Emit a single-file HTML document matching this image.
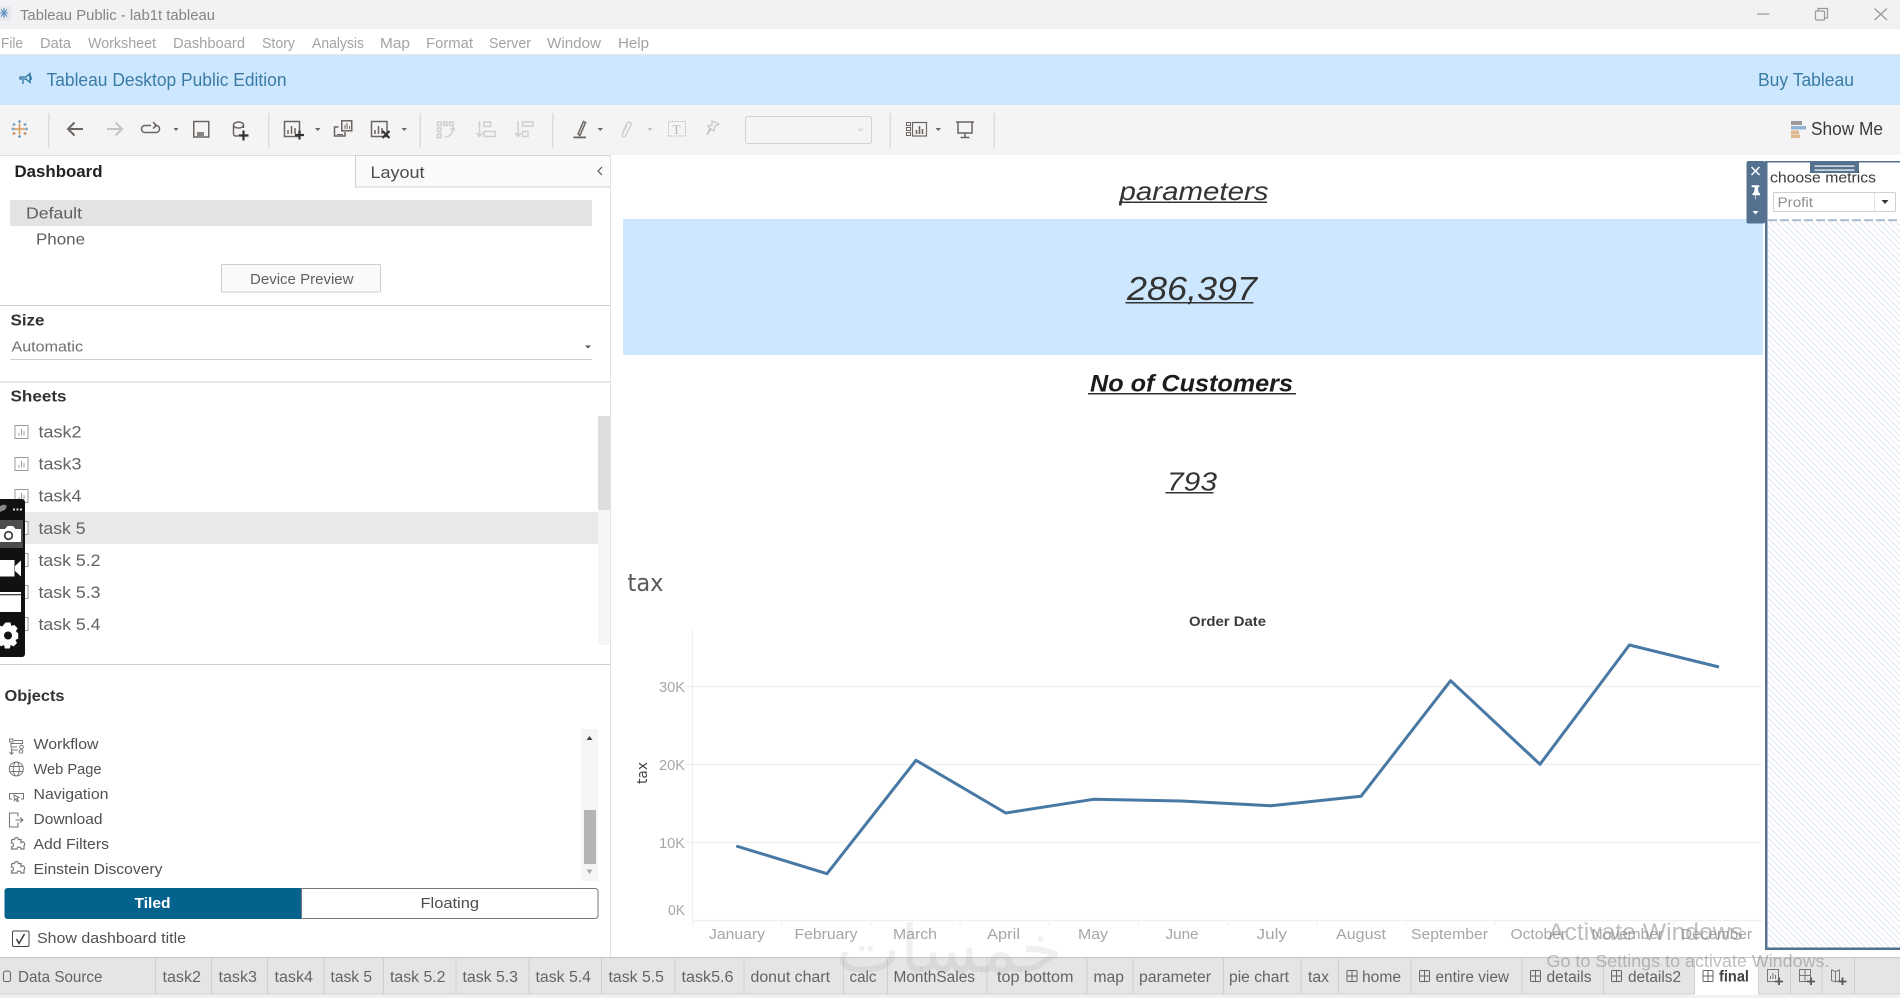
<!DOCTYPE html>
<html><head><meta charset="utf-8"><title>Tableau Public - lab1t tableau</title>
<style>
html,body{margin:0;padding:0;background:#fff;width:1900px;height:998px;overflow:hidden}
svg{display:block;position:absolute;left:0;top:0}
text{font-family:"Liberation Sans",sans-serif}
.m{font-size:14.5px;fill:#a3a3a3}
.d{font-size:16px;fill:#5e5e5e}
.h{font-size:16px;font-weight:bold;fill:#333}
.s{font-size:17px;fill:#636363}
.o{font-size:15px;fill:#505050}
.t{font-size:15.5px;fill:#646464}
.y{font-size:14.5px;fill:#a6a6a6}
.x{font-size:14.5px;fill:#a6a6a6}
.ic{fill:none;stroke:#6b6461;stroke-width:1.5}
.lt{fill:none;stroke:#cfcfcf;stroke-width:1.5}
.sh{fill:#fff;stroke:#999;stroke-width:1}
</style></head><body>
<svg width="1900" height="998" viewBox="0 0 1900 998" xmlns="http://www.w3.org/2000/svg">
<defs>
<pattern id="hatch" width="6" height="6" patternUnits="userSpaceOnUse">
<path d="M-1 -1L7 7M-1 5L1 7M5 -1L7 1" stroke="#dfe6ef" stroke-width="1"/>
</pattern>
<g id="sheet"><rect x="0.5" y="0.5" width="13" height="13" class="sh"/><path d="M4.500 10.500V8M7 10.500V4M9.500 10.500V6" stroke="#999" stroke-width="1" fill="none"/></g>
<g id="grid"><rect x="0.5" y="0.5" width="10" height="11" rx="1" fill="none" stroke="#666" stroke-width="1"/><path d="M5.5 0.5V11.5M0.5 6H10.5" stroke="#666" stroke-width="1"/></g>
<path id="puzzle" d="M4 3.5h2.5a2 2 0 1 1 4 0H13l0 3a2 2 0 1 1 3 3.2V13H13a2 2 0 1 0-4 0 H3.5v-2a2 2 0 1 0 0-4V5z" fill="none" stroke="#777" stroke-width="1.2"/>
</defs>

<!-- title bar -->
<rect width="1900" height="29" fill="#f1f2f4"/>
<rect x="0" y="6" width="11" height="15" fill="#e6e8ec"/>
<g fill="none" stroke-width="1.1"><path d="M4 8v10M0 13h8M1 9.500l6 7M7 9.500l-6 7" stroke="#5b8fc0"/></g>
<text x="20" y="20" font-size="14.5" fill="#858585" textLength="195" lengthAdjust="spacingAndGlyphs">Tableau Public - lab1t tableau</text>
<path d="M1757 14h12.5" stroke="#999" stroke-width="1.2"/>
<g fill="none" stroke="#999" stroke-width="1.2"><rect x="1815.5" y="11" width="9" height="9" rx="1"/><path d="M1818 11V8.5h9.5V18H1825"/></g>
<path d="M1874.5 8.5L1887 20M1887 8.5L1874.5 20" stroke="#999" stroke-width="1.2"/>

<!-- menu -->
<rect y="29" width="1900" height="26" fill="#fff"/>
<rect y="54" width="1900" height="1" fill="#e6e6e6"/>
<text class="m" x="1" y="48" textLength="22" lengthAdjust="spacingAndGlyphs">File</text>
<text class="m" x="40" y="48" textLength="31" lengthAdjust="spacingAndGlyphs">Data</text>
<text class="m" x="88" y="48" textLength="68" lengthAdjust="spacingAndGlyphs">Worksheet</text>
<text class="m" x="173" y="48" textLength="72" lengthAdjust="spacingAndGlyphs">Dashboard</text>
<text class="m" x="262" y="48" textLength="33" lengthAdjust="spacingAndGlyphs">Story</text>
<text class="m" x="312" y="48" textLength="52" lengthAdjust="spacingAndGlyphs">Analysis</text>
<text class="m" x="380" y="48" textLength="30" lengthAdjust="spacingAndGlyphs">Map</text>
<text class="m" x="426" y="48" textLength="47" lengthAdjust="spacingAndGlyphs">Format</text>
<text class="m" x="489" y="48" textLength="42" lengthAdjust="spacingAndGlyphs">Server</text>
<text class="m" x="547" y="48" textLength="54" lengthAdjust="spacingAndGlyphs">Window</text>
<text class="m" x="618" y="48" textLength="31" lengthAdjust="spacingAndGlyphs">Help</text>

<!-- banner -->
<rect y="55" width="1900" height="50" fill="#cde8fe"/>
<g fill="none" stroke="#2a70a0" stroke-width="1.3"><path d="M20 77h6l4-3.500v9l-4-3.500h-6zM23 80v4"/><path d="M29 75l2 2v3"/></g>
<text x="46.5" y="86" font-size="18" fill="#3b7ba6" textLength="240" lengthAdjust="spacingAndGlyphs">Tableau Desktop Public Edition</text>
<text x="1758" y="86" font-size="18" fill="#3b7ba6" textLength="96" lengthAdjust="spacingAndGlyphs">Buy Tableau</text>

<!-- toolbar -->
<rect y="105" width="1900" height="50" fill="#f4f4f4"/>
<g fill="#dcdcdc"><rect x="48" y="113" width="1.5" height="35"/><rect x="268" y="113" width="1.5" height="35"/><rect x="419.5" y="113" width="1.5" height="35"/><rect x="552" y="113" width="1.5" height="35"/><rect x="889.5" y="113" width="1.5" height="35"/><rect x="993.5" y="113" width="1.5" height="35"/></g>
<!-- logo -->
<g stroke-width="1.2" fill="none">
<path d="M19.500 123.500v11M14 129h11" stroke="#d99a5b" stroke-width="1.600"/>
<path d="M19.500 120v3M18 121.500h3M19.500 135v3M18 136.500h3M11.500 129h3M13 127.500v3M25 129h3M26.500 127.500v3" stroke="#6f9cc4"/>
<path d="M14 123v3M12.500 124.500h3M25 123v3M23.500 124.500h3" stroke="#6f9cc4"/>
<path d="M14 132v3M12.500 133.500h3M25 132v3M23.500 133.500h3" stroke="#c9895a"/>
</g>
<!-- arrows -->
<path d="M83 129H68.500M74.500 122.500L68 129L74.500 135.500" fill="none" stroke="#6b6461" stroke-width="2"/>
<path d="M107 129H121.500M115.500 122.500L122 129L115.500 135.500" fill="none" stroke="#c4c4c4" stroke-width="2"/>
<path d="M151 125.500h-6a3.500 3.500 0 0 0 0 7h11.500a3.500 3.500 0 0 0 3-3.500v-.5a3.500 3.500 0 0 0-3-3h-2M153 122l3.500 3.500-3.500 3" class="ic"/>
<path d="M173.500 128h5l-2.500 3z" fill="#666"/>
<rect x="193.750" y="121.500" width="15" height="15.500" class="ic"/><rect x="197" y="132" width="7" height="5" fill="#8a8480"/>
<path d="M233.500 125v9a2.500 2.500 0 0 0 2.500 2h2M243.500 125v3M233.500 125a5 3 0 0 1 10 0a5 3 0 0 1-10 0" class="ic"/>
<path d="M243.500 130.500v10M238.500 135.500h10" stroke="#333" stroke-width="2.200"/>
<!-- new sheet -->
<rect x="284.500" y="121.500" width="15" height="15" class="ic"/><path d="M288 134v-4M291.500 134v-8M295 134v-6" stroke="#6b6461" stroke-width="1.500"/>
<path d="M299.500 130.500v9M295 135h9" stroke="#333" stroke-width="2.200"/>
<path d="M315 128h5.500l-2.750 3z" fill="#666"/>
<rect x="341.750" y="120.750" width="10" height="10" class="ic"/><path d="M345 129v-4M347 129v-6M349.500 129v-3" stroke="#6b6461"/>
<path d="M338.500 127H334.500v9h10.500v-4" class="ic"/><path d="M337 134.500h6" stroke="#6b6461"/>
<rect x="371.500" y="121.500" width="15.500" height="15" class="ic"/><path d="M375 134v-4M378.500 134v-8M382 134v-6" stroke="#6b6461" stroke-width="1.500"/>
<path d="M382.500 131l7 7M389.500 131l-7 7" stroke="#333" stroke-width="2.200"/>
<path d="M401.500 128h5.500l-2.750 3z" fill="#666"/>
<!-- swap -->
<g class="lt"><rect x="437.500" y="122" width="3.500" height="3.500"/><rect x="443.500" y="122" width="3.500" height="3.500"/><rect x="449.500" y="122" width="3.500" height="3.500"/><rect x="437.500" y="128" width="3.500" height="3.500"/><rect x="437.500" y="134" width="3.500" height="3.500"/><path d="M453 129a8 8 0 0 1-8 8M450.500 130l2.500-2.500 1.500 3"/></g>
<!-- sort -->
<g class="lt"><path d="M479.500 121v15M476.500 133l3 3.500 3-3.500"/><rect x="484" y="122" width="6.500" height="4.500"/><rect x="484" y="131.500" width="11" height="5"/></g>
<g class="lt"><path d="M518 121v15M515 133l3 3.500 3-3.500"/><rect x="522.500" y="122" width="10.500" height="4"/><rect x="522.500" y="131.500" width="5.500" height="5"/></g>
<!-- pen -->
<path d="M578 134l5.500-12.500 2 1L580 135.500z" class="ic"/><rect x="573.500" y="136.500" width="12.500" height="1.800" fill="#6b6461"/>
<path d="M597.500 128h5.500l-2.750 3z" fill="#666"/>
<path d="M627 125l-4.500 8.500c-1.500 3 2 4.500 3.500 1.500l5-10c1-3-2.500-4-4-1.500l-4 8" fill="none" stroke="#c9c9c9" stroke-width="1.300"/>
<path d="M647.500 128h5l-2.500 3z" fill="#c4c4c4"/>
<rect x="668.500" y="121.500" width="17" height="14.500" fill="none" stroke="#c4c4c4" stroke-dasharray="2 1"/>
<text x="672.500" y="134" font-size="13" fill="#b5b5b5" style="font-family:'Liberation Serif',serif">T</text>
<path d="M712 121l7 3-4 2-1 5-3-2-4 6 3-7-2-2 4-1z" fill="none" stroke="#c4c4c4" stroke-width="1.200"/>
<rect x="745.500" y="116.500" width="126" height="27" rx="2" fill="#f4f4f4" stroke="#d2d2d2"/>
<path d="M857 128.500h7l-3.500 3.500z" fill="#dcdcdc"/>
<!-- cards -->
<g class="ic"><rect x="906.500" y="122.500" width="4" height="3" stroke-width="1"/><rect x="906.500" y="127.500" width="4" height="3" stroke-width="1"/><rect x="906.500" y="132.500" width="4" height="3" stroke-width="1"/><rect x="912.500" y="122.500" width="14" height="13.500" stroke-width="1.200"/></g>
<path d="M916.500 134v-4M919.500 134v-8M922.500 134v-5" stroke="#6b6461" stroke-width="1.600"/>
<path d="M935.500 128h5.500l-2.750 3z" fill="#666"/>
<path d="M956 122h18M958 122v11h14v-11M965 133v4M960.500 137.500h9" class="ic"/>
<!-- show me -->
<rect x="1791" y="121" width="11" height="4" fill="#9a9a9a"/><rect x="1791" y="126" width="15" height="3.500" fill="#8fb4d6"/><rect x="1791" y="130.500" width="8" height="3.500" fill="#e0b88e"/><rect x="1791" y="134.500" width="9" height="3.500" fill="#e0b88e"/>
<text x="1811" y="135" font-size="18" fill="#3c3c3c" textLength="72" lengthAdjust="spacingAndGlyphs">Show Me</text>

<!-- left pane -->
<rect x="610" y="155" width="1" height="802" fill="#e2e2e2"/>
<rect x="0" y="155" width="355" height="1" fill="#dedede"/>
<rect x="355" y="155" width="255" height="32" fill="#fafafa"/>
<path d="M355.500 155v32H610" fill="none" stroke="#d0d0d0"/>
<path d="M355 155.500H610" stroke="#d6d6d6"/>
<text x="14.500" y="177" font-size="17" font-weight="bold" fill="#222" textLength="88" lengthAdjust="spacingAndGlyphs">Dashboard</text>
<text x="370.500" y="178" font-size="17" fill="#4c4c4c" textLength="54" lengthAdjust="spacingAndGlyphs">Layout</text>
<path d="M602 167l-4 4 4 4" fill="none" stroke="#555" stroke-width="1.200"/>
<rect x="10" y="200" width="582" height="26" fill="#e3e3e3"/>
<text class="d" x="26" y="218.500" textLength="56" lengthAdjust="spacingAndGlyphs">Default</text>
<text class="d" x="36" y="244.500" textLength="49" lengthAdjust="spacingAndGlyphs">Phone</text>
<rect x="221.500" y="264.500" width="159" height="27.500" rx="1" fill="#fafafa" stroke="#cdcdcd"/>
<text x="250" y="284" font-size="14.500" fill="#606060" textLength="103.500" lengthAdjust="spacingAndGlyphs">Device Preview</text>
<rect y="305" width="610" height="1" fill="#cfcfcf"/>
<text class="h" x="10.500" y="325.500" textLength="34" lengthAdjust="spacingAndGlyphs">Size</text>
<text x="11.500" y="351.500" font-size="14.500" fill="#707070" textLength="71.500" lengthAdjust="spacingAndGlyphs">Automatic</text>
<path d="M585 345.500h6l-3 3z" fill="#555"/>
<rect x="10" y="359" width="582" height="1" fill="#cfcfcf"/>
<rect y="381.500" width="610" height="1" fill="#cfcfcf"/>
<text class="h" x="10.500" y="401.500" textLength="56" lengthAdjust="spacingAndGlyphs">Sheets</text>

<rect x="598" y="416" width="12" height="229" fill="#f6f6f6"/>
<rect x="598" y="416" width="12" height="94" fill="#dedede"/>
<rect x="0" y="512" width="598" height="32" fill="#e9e9e9"/>
<use href="#sheet" x="14.500" y="425"/><use href="#sheet" x="14.500" y="457"/><use href="#sheet" x="14.500" y="489"/><use href="#sheet" x="14.500" y="521"/><use href="#sheet" x="14.500" y="553"/><use href="#sheet" x="14.500" y="585"/><use href="#sheet" x="14.500" y="617"/>
<text class="s" x="38.500" y="437.500" textLength="43" lengthAdjust="spacingAndGlyphs">task2</text>
<text class="s" x="38.500" y="469.500" textLength="43" lengthAdjust="spacingAndGlyphs">task3</text>
<text class="s" x="38.500" y="501.500" textLength="43" lengthAdjust="spacingAndGlyphs">task4</text>
<text class="s" x="38.500" y="534" textLength="47" lengthAdjust="spacingAndGlyphs">task 5</text>
<text class="s" x="38.500" y="566" textLength="62" lengthAdjust="spacingAndGlyphs">task 5.2</text>
<text class="s" x="38.500" y="598" textLength="62" lengthAdjust="spacingAndGlyphs">task 5.3</text>
<text class="s" x="38.500" y="630" textLength="62" lengthAdjust="spacingAndGlyphs">task 5.4</text>
<rect y="664" width="610" height="1" fill="#cfcfcf"/>

<!-- capture overlay -->
<path d="M0 499H22a3 3 0 0 1 3 3V654a3 3 0 0 1-3 3H0z" fill="#111"/>
<path d="M0 512V506l4-1.500 3 1.500-2 4-3 1z" fill="#888"/>
<g fill="#ddd"><rect x="13" y="508.500" width="2" height="2"/><rect x="16.500" y="508.500" width="2" height="2"/><rect x="20" y="508.500" width="2" height="2"/></g>
<rect x="0" y="520" width="23" height="28" fill="#4d4d4d"/>
<path d="M0 529h5l2.500-3h5.500l2.500 3H21v13H0z" fill="#fff"/><circle cx="8.500" cy="535.500" r="3.800" fill="#fff" stroke="#333" stroke-width="1.600"/>
<rect x="0" y="560" width="14.500" height="16.500" fill="#fff"/><path d="M15 566l6-5.500v16l-6-5.500z" fill="#fff"/>
<rect x="0" y="592" width="21" height="20" fill="#fff"/><rect x="0" y="594" width="21" height="1.300" fill="#444"/>
<path d="M5.500 622h5l.8 3.400 3-.9 3.300 3.300-1.700 3 2.300 2.100V638l-2.700 1.500 1.500 3-3.300 3.400-3-1.400-1 3.500h-4.800l-.9-3.500-3 1.400-3-3.300 1.500-3L-5 638v-4.800l2.600-1.900-1.400-3.100 3-3.200 3 1z" fill="#fff" transform="translate(0,.5)"/>
<circle cx="8" cy="635.500" r="4" fill="#111"/>

<!-- objects -->
<text class="h" x="4.500" y="701" font-weight="bold" textLength="60" lengthAdjust="spacingAndGlyphs">Objects</text>
<g fill="none" stroke="#777" stroke-width="1">
<rect x="9.500" y="739" width="3.500" height="3"/><path d="M14 740.500h8.500v3H11v3.500h6M11 750h7"/><circle cx="21.500" cy="747" r="1.800"/><circle cx="21" cy="751.500" r="1.800"/><path d="M11.500 748v6M9.500 752l2 2.500 2-2.500"/>
<circle cx="16.300" cy="769" r="7"/><ellipse cx="16.300" cy="769" rx="3" ry="7"/><path d="M9.300 766.500h14M9.300 771.500h14"/>
<path d="M12 799H9.500v-5.500h14V799H21"/><path d="M14 795l5 2.500-2 1 1.500 2.500-1.200.6-1.400-2.500-1.600 1.500z"/>
<path d="M18 813h-8.500v14H18v-4.500M18 816.500V813M15.500 820h7M20 817.500l3 2.500-3 2.500" stroke-width="1.100"/>
</g>
<use href="#puzzle" x="8" y="836"/><use href="#puzzle" x="8" y="860"/>
<text class="o" x="33.500" y="749" textLength="65" lengthAdjust="spacingAndGlyphs">Workflow</text>
<text class="o" x="33.500" y="774" textLength="68" lengthAdjust="spacingAndGlyphs">Web Page</text>
<text class="o" x="33.500" y="799" textLength="75" lengthAdjust="spacingAndGlyphs">Navigation</text>
<text class="o" x="33.500" y="824" textLength="69" lengthAdjust="spacingAndGlyphs">Download</text>
<text class="o" x="33.500" y="849" textLength="75.500" lengthAdjust="spacingAndGlyphs">Add Filters</text>
<text class="o" x="33.500" y="874" textLength="129" lengthAdjust="spacingAndGlyphs">Einstein Discovery</text>
<rect x="581" y="729" width="17" height="152" fill="#f5f5f5"/>
<rect x="584" y="810" width="12" height="54" fill="#b4b4b4"/>
<path d="M586.500 740h6l-3-4z" fill="#444"/><path d="M586.500 869.500h6l-3 4.500z" fill="#aaa"/>
<path d="M7.500 888H301.500V919H7.500a3 3 0 0 1-3-3V891a3 3 0 0 1 3-3z" fill="#05628c"/>
<path d="M301.500 888.500H595a3 3 0 0 1 3 3V915.500a3 3 0 0 1-3 3H301.500z" fill="#fff" stroke="#777"/>
<text x="134.500" y="908" font-size="15" font-weight="bold" fill="#fff" textLength="36" lengthAdjust="spacingAndGlyphs">Tiled</text>
<text x="420.500" y="908" font-size="15" fill="#4c4c4c" textLength="58.500" lengthAdjust="spacingAndGlyphs">Floating</text>
<rect x="12.500" y="931" width="16.500" height="15.500" rx="1.500" fill="#fff" stroke="#444"/>
<path d="M16.500 939l2.500 4.500L24.500 934" fill="none" stroke="#333" stroke-width="1.400"/>
<text class="o" x="37" y="943" textLength="149" lengthAdjust="spacingAndGlyphs">Show dashboard title</text>

<!-- dashboard content -->
<text x="1119.500" y="200" font-size="26" font-style="italic" fill="#333" textLength="149" lengthAdjust="spacingAndGlyphs">parameters</text>
<rect x="1119" y="201.500" width="148" height="1.500" fill="#333"/>
<rect x="623" y="219" width="1140" height="136" fill="#cde8fe"/>
<text x="1127" y="300" font-size="33" font-style="italic" fill="#333" textLength="130" lengthAdjust="spacingAndGlyphs">286,397</text>
<rect x="1125.500" y="302" width="128" height="1.500" fill="#333"/>
<text x="1090" y="391.500" font-size="24.500" font-style="italic" font-weight="bold" fill="#1c1c1c" textLength="203" lengthAdjust="spacingAndGlyphs">No of Customers</text>
<rect x="1088" y="393" width="208" height="1.500" fill="#333"/>
<text x="1167" y="490.500" font-size="26" font-style="italic" fill="#333" textLength="50" lengthAdjust="spacingAndGlyphs">793</text>
<rect x="1165.500" y="492" width="48" height="1.500" fill="#333"/>
<text x="627.500" y="591" font-size="24" fill="#5a5a5a" style="font-family:'DejaVu Sans',sans-serif" textLength="36" lengthAdjust="spacingAndGlyphs">tax</text>
<text x="1189" y="626" font-size="14" font-weight="bold" fill="#3a3a3a" textLength="77" lengthAdjust="spacingAndGlyphs">Order Date</text>

<!-- chart -->
<g stroke="#efefef" stroke-width="1.200" fill="none">
<path d="M692.500 630V920.500"/>
<path d="M685 686.500H1762M685 764.500H1762M685 842.500H1762M692 920.500H1762"/>
<path d="M692.500 920v5M781.700 920v5M870.900 920v5M960.100 920v5M1049.300 920v5M1138.500 920v5M1227.700 920v5M1316.900 920v5M1406.100 920v5M1495.300 920v5M1584.500 920v5M1673.700 920v5"/>
</g>
<text class="y" x="659" y="692" textLength="26" lengthAdjust="spacingAndGlyphs">30K</text>
<text class="y" x="659" y="770" textLength="26" lengthAdjust="spacingAndGlyphs">20K</text>
<text class="y" x="659" y="848" textLength="26" lengthAdjust="spacingAndGlyphs">10K</text>
<text class="y" x="668" y="915" textLength="17" lengthAdjust="spacingAndGlyphs">0K</text>
<text transform="translate(647,784) rotate(-90)" font-size="14" fill="#444" style="font-family:'DejaVu Sans',sans-serif" textLength="22" lengthAdjust="spacingAndGlyphs">tax</text>
<polyline points="736.300,846 827,873.700 916,760.300 1005.700,813 1093.500,799.300 1181.400,801 1271,805.700 1361,796.300 1450.600,680.700 1540,764.300 1629.400,645 1719,667" fill="none" stroke="#4878a4" stroke-width="3" stroke-linejoin="round"/>
<text class="x" x="709" y="939" textLength="56" lengthAdjust="spacingAndGlyphs">January</text>
<text class="x" x="794.500" y="939" textLength="63" lengthAdjust="spacingAndGlyphs">February</text>
<text class="x" x="893" y="939" textLength="44" lengthAdjust="spacingAndGlyphs">March</text>
<text class="x" x="987" y="939" textLength="33" lengthAdjust="spacingAndGlyphs">April</text>
<text class="x" x="1078" y="939" textLength="30" lengthAdjust="spacingAndGlyphs">May</text>
<text class="x" x="1165.500" y="939" textLength="33" lengthAdjust="spacingAndGlyphs">June</text>
<text class="x" x="1256.500" y="939" textLength="30.500" lengthAdjust="spacingAndGlyphs">July</text>
<text class="x" x="1336" y="939" textLength="50" lengthAdjust="spacingAndGlyphs">August</text>
<text class="x" x="1411" y="939" textLength="77" lengthAdjust="spacingAndGlyphs">September</text>
<text class="x" x="1510.500" y="939" textLength="55.500" lengthAdjust="spacingAndGlyphs">October</text>
<text class="x" x="1591.500" y="939" textLength="71.500" lengthAdjust="spacingAndGlyphs">November</text>
<text class="x" x="1681" y="939" textLength="71" lengthAdjust="spacingAndGlyphs">December</text>

<!-- floating filter -->
<rect x="1767" y="163" width="133" height="785" fill="#fff"/>
<rect x="1768" y="222" width="132" height="726" fill="url(#hatch)"/>
<rect x="1765" y="161" width="2.500" height="789" fill="#54728f"/>
<rect x="1765" y="161" width="135" height="1.500" fill="#54728f"/>
<rect x="1765" y="947.500" width="135" height="2.500" fill="#54728f"/>
<rect x="1746.500" y="161" width="18.500" height="62.500" rx="2" fill="#54728f"/>
<path d="M1751.500 167l8 8M1759.500 167l-8 8" stroke="#fff" stroke-width="1.500"/>
<path d="M1752 185.500h7v1.500h-1.500l.8 5.500 1.500 1.200V195h-7v-1.300l1.500-1.200.8-5.500H1752zM1755.500 195v4.500" fill="#fff" stroke="#fff" stroke-width=".6"/>
<path d="M1752.500 211h6l-3 3.500z" fill="#fff"/>
<rect x="1810" y="161" width="49" height="12" fill="#54728f"/>
<rect x="1814.500" y="165.500" width="40" height="1.200" fill="#fff"/><rect x="1814.500" y="169.500" width="40" height="1.200" fill="#fff"/>
<text x="1770" y="182.500" font-size="15" fill="#3c3c3c" textLength="106" lengthAdjust="spacingAndGlyphs">choose metrics</text>
<rect x="1773.500" y="192.500" width="122" height="19" rx="1" fill="#fff" stroke="#d0d0d0"/>
<rect x="1874" y="192.500" width="1" height="19" fill="#e2e2e2"/>
<text x="1777.500" y="207" font-size="14" fill="#909090" textLength="35.500" lengthAdjust="spacingAndGlyphs">Profit</text>
<path d="M1881.500 200h7l-3.500 4z" fill="#333"/>
<path d="M1768 220.250H1900" stroke="#a8bcd2" stroke-width="2" stroke-dasharray="9 3"/>

<!-- tab bar -->
<rect y="957" width="1900" height="41" fill="#f1f1f1"/>
<rect y="957" width="1900" height="37" fill="#e5e5e5"/>
<rect y="957" width="1900" height="1.200" fill="#c9c9c9"/>
<rect y="993.500" width="1900" height="1" fill="#d4d4d4"/>
<rect x="1694.500" y="958" width="63.500" height="37" fill="#fff"/>
<g fill="#cfcfcf">
<rect x="155" y="958" width="1" height="36"/><rect x="211" y="958" width="1" height="36"/><rect x="267" y="958" width="1" height="36"/><rect x="323.500" y="958" width="1" height="36"/><rect x="383" y="958" width="1" height="36"/><rect x="455.500" y="958" width="1" height="36"/><rect x="528.500" y="958" width="1" height="36"/><rect x="601" y="958" width="1" height="36"/><rect x="674.500" y="958" width="1" height="36"/><rect x="743.500" y="958" width="1" height="36"/><rect x="843" y="958" width="1" height="36"/><rect x="887" y="958" width="1" height="36"/><rect x="986.500" y="958" width="1" height="36"/><rect x="1086.500" y="958" width="1" height="36"/><rect x="1132.500" y="958" width="1" height="36"/><rect x="1223" y="958" width="1" height="36"/><rect x="1300.500" y="958" width="1" height="36"/><rect x="1338" y="958" width="1" height="36"/><rect x="1410.500" y="958" width="1" height="36"/><rect x="1521.500" y="958" width="1" height="36"/><rect x="1603" y="958" width="1" height="36"/><rect x="1694" y="958" width="1" height="36"/><rect x="1758" y="958" width="1" height="36"/><rect x="1790" y="958" width="1" height="36"/><rect x="1821.500" y="958" width="1" height="36"/><rect x="1854" y="958" width="1" height="36"/>
</g>
<path d="M3.500 973v7a1.500 1.500 0 0 0 1.500 1.500h4a1.500 1.500 0 0 0 1.500-1.500v-7a3.500 2 0 0 0-7 0z" fill="none" stroke="#666"/>
<text class="t" x="18" y="982" textLength="84.500" lengthAdjust="spacingAndGlyphs">Data Source</text>
<text class="t" x="162.500" y="982" textLength="38.500" lengthAdjust="spacingAndGlyphs">task2</text>
<text class="t" x="218.500" y="982" textLength="38.500" lengthAdjust="spacingAndGlyphs">task3</text>
<text class="t" x="274.500" y="982" textLength="38.500" lengthAdjust="spacingAndGlyphs">task4</text>
<text class="t" x="330.500" y="982" textLength="41.500" lengthAdjust="spacingAndGlyphs">task 5</text>
<text class="t" x="390" y="982" textLength="55.500" lengthAdjust="spacingAndGlyphs">task 5.2</text>
<text class="t" x="462.500" y="982" textLength="55.500" lengthAdjust="spacingAndGlyphs">task 5.3</text>
<text class="t" x="535.500" y="982" textLength="55.500" lengthAdjust="spacingAndGlyphs">task 5.4</text>
<text class="t" x="608.500" y="982" textLength="55.500" lengthAdjust="spacingAndGlyphs">task 5.5</text>
<text class="t" x="681.500" y="982" textLength="52" lengthAdjust="spacingAndGlyphs">task5.6</text>
<text class="t" x="750.500" y="982" textLength="79.500" lengthAdjust="spacingAndGlyphs">donut chart</text>
<text class="t" x="849.500" y="982" textLength="27" lengthAdjust="spacingAndGlyphs">calc</text>
<text class="t" x="893.500" y="982" textLength="81.500" lengthAdjust="spacingAndGlyphs">MonthSales</text>
<text class="t" x="997" y="982" textLength="76.500" lengthAdjust="spacingAndGlyphs">top bottom</text>
<text class="t" x="1093.500" y="982" textLength="30.500" lengthAdjust="spacingAndGlyphs">map</text>
<text class="t" x="1139" y="982" textLength="72" lengthAdjust="spacingAndGlyphs">parameter</text>
<text class="t" x="1229" y="982" textLength="60" lengthAdjust="spacingAndGlyphs">pie chart</text>
<text class="t" x="1308" y="982" textLength="21" lengthAdjust="spacingAndGlyphs">tax</text>
<use href="#grid" x="1346.500" y="970"/><text class="t" x="1362" y="982" textLength="39" lengthAdjust="spacingAndGlyphs">home</text>
<use href="#grid" x="1419" y="970"/><text class="t" x="1435.500" y="982" textLength="73.500" lengthAdjust="spacingAndGlyphs">entire view</text>
<use href="#grid" x="1530" y="970"/><text class="t" x="1546.500" y="982" textLength="45" lengthAdjust="spacingAndGlyphs">details</text>
<use href="#grid" x="1611" y="970"/><text class="t" x="1628" y="982" textLength="53" lengthAdjust="spacingAndGlyphs">details2</text>
<use href="#grid" x="1702.500" y="970"/><text x="1719" y="981.500" font-size="15.500" font-weight="bold" fill="#444" textLength="30" lengthAdjust="spacingAndGlyphs">final</text>
<g fill="none" stroke="#777" stroke-width="1">
<rect x="1767.500" y="969.500" width="11" height="12"/><path d="M1770.500 979v-3M1773 979v-6M1775.500 979v-4"/>
<rect x="1799.500" y="969.500" width="11" height="12"/><path d="M1805 969.500v12M1799.500 975.500h11"/>
<path d="M1831.500 970l4 1.500 4-1.500v10.500l-4 1.500-4-1.500zM1835.500 971.500v10.500"/>
</g>
<path d="M1779 977.500v7.500M1775 981.500h8M1811 977.500v7.500M1807 981.500h8M1842.500 977.500v7.500M1838.500 981.500h8" stroke="#555" stroke-width="1.800"/>

<!-- overlays -->
<text x="836" y="972" font-size="66" fill="#777" fill-opacity=".11" style="font-family:'DejaVu Sans',sans-serif" textLength="227" lengthAdjust="spacingAndGlyphs" direction="rtl" transform="translate(227,0)">خمسات</text>
<text x="1548" y="940" font-size="24" fill="#888" fill-opacity=".55" textLength="195" lengthAdjust="spacingAndGlyphs">Activate Windows</text>
<text x="1546.500" y="967" font-size="17.500" fill="#888" fill-opacity=".55" textLength="283" lengthAdjust="spacingAndGlyphs">Go to Settings to activate Windows.</text>
</svg>
</body></html>
